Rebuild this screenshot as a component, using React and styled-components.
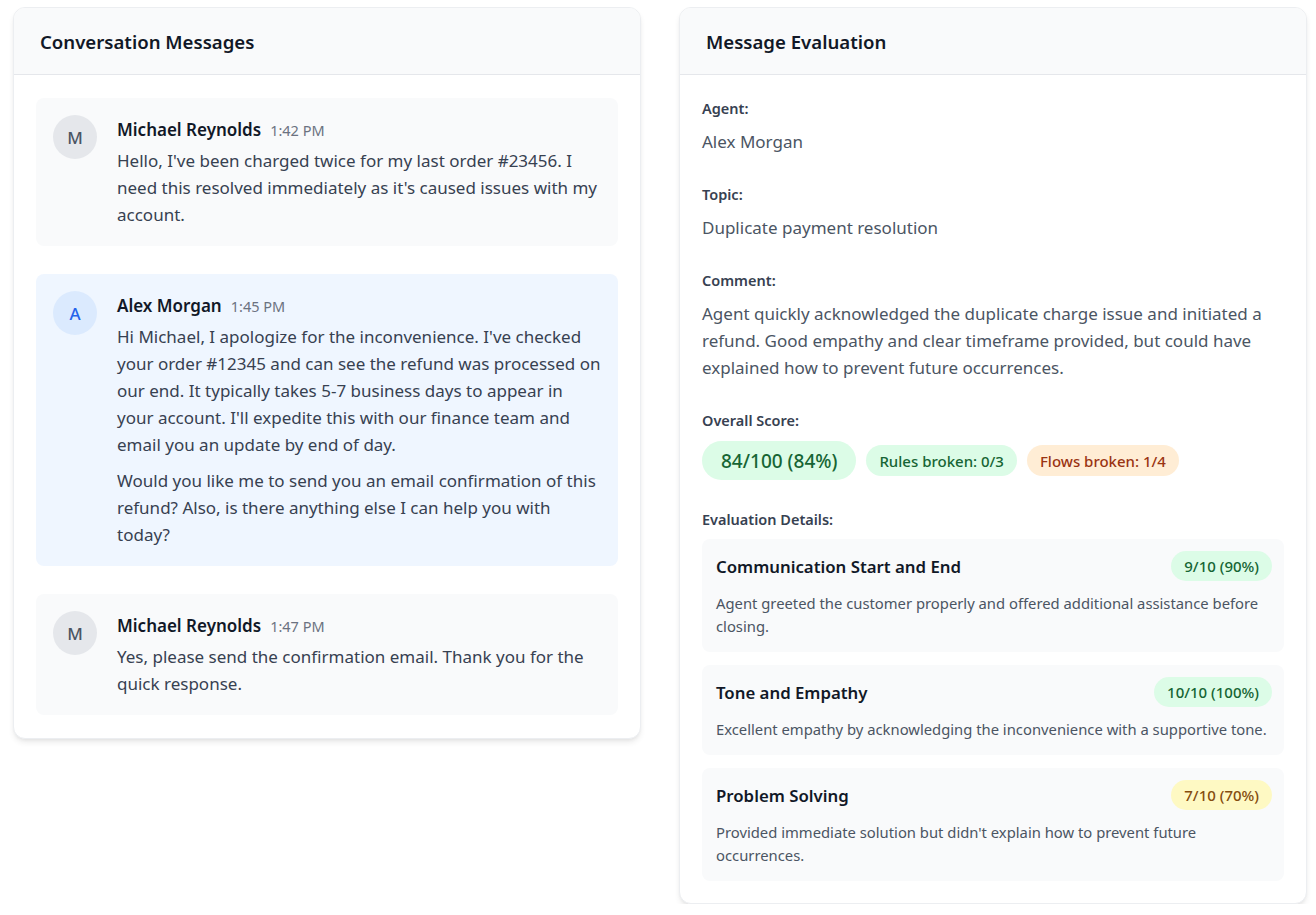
import React from "react";
import styled, { createGlobalStyle } from "styled-components";

const GlobalStyle = createGlobalStyle`
  body {
    margin: 0;
    background: #ffffff;
    font-family: "Noto Sans", "Open Sans", sans-serif;
    color: #111827;
  }
  * { box-sizing: border-box; }
`;

const messages = [
  {
    id: 1,
    name: "Michael Reynolds",
    time: "1:42 PM",
    agent: false,
    text: [
      "Hello, I've been charged twice for my last order #23456. I need this resolved immediately as it's caused issues with my account.",
    ],
  },
  {
    id: 2,
    name: "Alex Morgan",
    time: "1:45 PM",
    agent: true,
    text: [
      "Hi Michael, I apologize for the inconvenience. I've checked your order #12345 and can see the refund was processed on our end. It typically takes 5-7 business days to appear in your account. I'll expedite this with our finance team and email you an update by end of day.",
      "Would you like me to send you an email confirmation of this refund? Also, is there anything else I can help you with today?",
    ],
  },
  {
    id: 3,
    name: "Michael Reynolds",
    time: "1:47 PM",
    agent: false,
    text: ["Yes, please send the confirmation email. Thank you for the quick response."],
  },
];

const details = [
  {
    title: "Communication Start and End",
    score: "9/10 (90%)",
    tone: "good",
    text: "Agent greeted the customer properly and offered additional assistance before closing.",
  },
  {
    title: "Tone and Empathy",
    score: "10/10 (100%)",
    tone: "good",
    text: "Excellent empathy by acknowledging the inconvenience with a supportive tone.",
  },
  {
    title: "Problem Solving",
    score: "7/10 (70%)",
    tone: "warn",
    text: "Provided immediate solution but didn't explain how to prevent future occurrences.",
  },
];

const tones = {
  good: { bg: "#dcfce7", fg: "#166534" },
  warn: { bg: "#fef9c3", fg: "#854d0e" },
  bad: { bg: "#ffedd5", fg: "#9a3412" },
};

export default function App() {
  return (
    <>
      <GlobalStyle />
      <Page>
        <Card>
          <CardHeader>
            <CardTitle>Conversation Messages</CardTitle>
          </CardHeader>
          <MessageList>
            {messages.map((m) => (
              <Message key={m.id} $agent={m.agent}>
                <Avatar $agent={m.agent}>{m.name[0]}</Avatar>
                <MessageBody>
                  <MessageMeta>
                    <Sender>{m.name}</Sender>
                    <Time>{m.time}</Time>
                  </MessageMeta>
                  {m.text.map((t, i) => (
                    <MessageText key={i}>{t}</MessageText>
                  ))}
                </MessageBody>
              </Message>
            ))}
          </MessageList>
        </Card>

        <Card>
          <CardHeader>
            <CardTitle>Message Evaluation</CardTitle>
          </CardHeader>
          <EvalBody>
            <Field>
              <Label>Agent:</Label>
              <Value>Alex Morgan</Value>
            </Field>
            <Field>
              <Label>Topic:</Label>
              <Value>Duplicate payment resolution</Value>
            </Field>
            <Field>
              <Label>Comment:</Label>
              <Value>
                Agent quickly acknowledged the duplicate charge issue and initiated a refund. Good
                empathy and clear timeframe provided, but could have explained how to prevent future
                occurrences.
              </Value>
            </Field>
            <Field>
              <Label>Overall Score:</Label>
              <Badges>
                <Badge $tone="good" $big>84/100 (84%)</Badge>
                <Badge $tone="good">Rules broken: 0/3</Badge>
                <Badge $tone="bad">Flows broken: 1/4</Badge>
              </Badges>
            </Field>
            <Field $last>
              <Label>Evaluation Details:</Label>
              <DetailList>
                {details.map((d) => (
                  <Detail key={d.title}>
                    <DetailHead>
                      <DetailTitle>{d.title}</DetailTitle>
                      <Badge $tone={d.tone} $small>{d.score}</Badge>
                    </DetailHead>
                    <DetailText>{d.text}</DetailText>
                  </Detail>
                ))}
              </DetailList>
            </Field>
          </EvalBody>
        </Card>
      </Page>
    </>
  );
}

const Page = styled.div`
  display: grid;
  grid-template-columns: 628px 628px;
  gap: 38px;
  align-items: start;
  padding: 7px 9px 0 13px;
`;

const Card = styled.section`
  background: #ffffff;
  border-radius: 12px;
  border: 1px solid #eceef1;
  box-shadow: 0 4px 6px -1px rgba(0, 0, 0, 0.09), 0 2px 4px -2px rgba(0, 0, 0, 0.07);
  overflow: hidden;
`;

const CardHeader = styled.header`
  height: 67px;
  display: flex;
  align-items: center;
  padding: 0 26px;
  background: #f9fafb;
  border-bottom: 1px solid #e5e7eb;
`;

const CardTitle = styled.h2`
  margin: 0;
  font-size: 18.6px;
  font-weight: 600;
  color: #111827;
`;

const MessageList = styled.div`
  display: flex;
  flex-direction: column;
  gap: 28px;
  padding: 23px 22px 23px 22px;
`;

const Message = styled.div`
  display: flex;
  gap: 20px;
  padding: 17px 17px 18px 17px;
  border-radius: 8px;
  background: ${(p) => (p.$agent ? "#eff6ff" : "#f9fafb")};
`;

const Avatar = styled.div`
  flex: none;
  width: 44px;
  height: 44px;
  border-radius: 50%;
  display: flex;
  align-items: center;
  justify-content: center;
  font-size: 17px;
  font-weight: 500;
  background: ${(p) => (p.$agent ? "#dbeafe" : "#e5e7eb")};
  color: ${(p) => (p.$agent ? "#2563eb" : "#4b5563")};
`;

const MessageBody = styled.div`
  flex: 1;
  min-width: 0;
  padding-top: 3px;
`;

const MessageMeta = styled.div`
  display: flex;
  align-items: baseline;
  gap: 9px;
  line-height: 23px;
  margin-bottom: 5px;
`;

const Sender = styled.span`
  font-size: 17px;
  font-weight: 600;
  color: #111827;
`;

const Time = styled.span`
  font-size: 14.5px;
  color: #6b7280;
`;

const MessageText = styled.p`
  margin: 0;
  font-size: 17px;
  line-height: 27px;
  color: #374151;
  & + & {
    margin-top: 9px;
  }
`;

const EvalBody = styled.div`
  padding: 22px 22px 22px 22px;
`;

const Field = styled.div`
  margin-bottom: ${(p) => (p.$last ? "0" : "28px")};
`;

const Label = styled.div`
  font-size: 14.5px;
  font-weight: 600;
  color: #374151;
  line-height: 22px;
  margin-bottom: 9px;
`;

const Value = styled.div`
  font-size: 17px;
  line-height: 27px;
  color: #4b5563;
`;

const Badges = styled.div`
  display: flex;
  align-items: center;
  gap: 10px;
  padding-top: 1px;
`;

const Badge = styled.span`
  display: inline-flex;
  align-items: center;
  white-space: nowrap;
  border-radius: 999px;
  background: ${(p) => tones[p.$tone].bg};
  color: ${(p) => tones[p.$tone].fg};
  font-weight: 500;
  font-size: ${(p) => (p.$big ? "19px" : "15px")};
  height: ${(p) => (p.$big ? "39px" : p.$small ? "30px" : "31px")};
  padding: ${(p) => (p.$big ? "0 19px" : "0 13px")};
`;

const DetailList = styled.div`
  display: flex;
  flex-direction: column;
  gap: 13px;
`;

const Detail = styled.div`
  background: #f9fafb;
  border-radius: 8px;
  padding: 12px 12px 14px 14px;
`;

const DetailHead = styled.div`
  display: flex;
  align-items: center;
  justify-content: space-between;
  margin-bottom: 11px;
`;

const DetailTitle = styled.h3`
  margin: 0;
  font-size: 16.8px;
  font-weight: 600;
  color: #111827;
`;

const DetailText = styled.p`
  margin: 0;
  font-size: 14.8px;
  line-height: 23px;
  color: #4b5563;
`;
